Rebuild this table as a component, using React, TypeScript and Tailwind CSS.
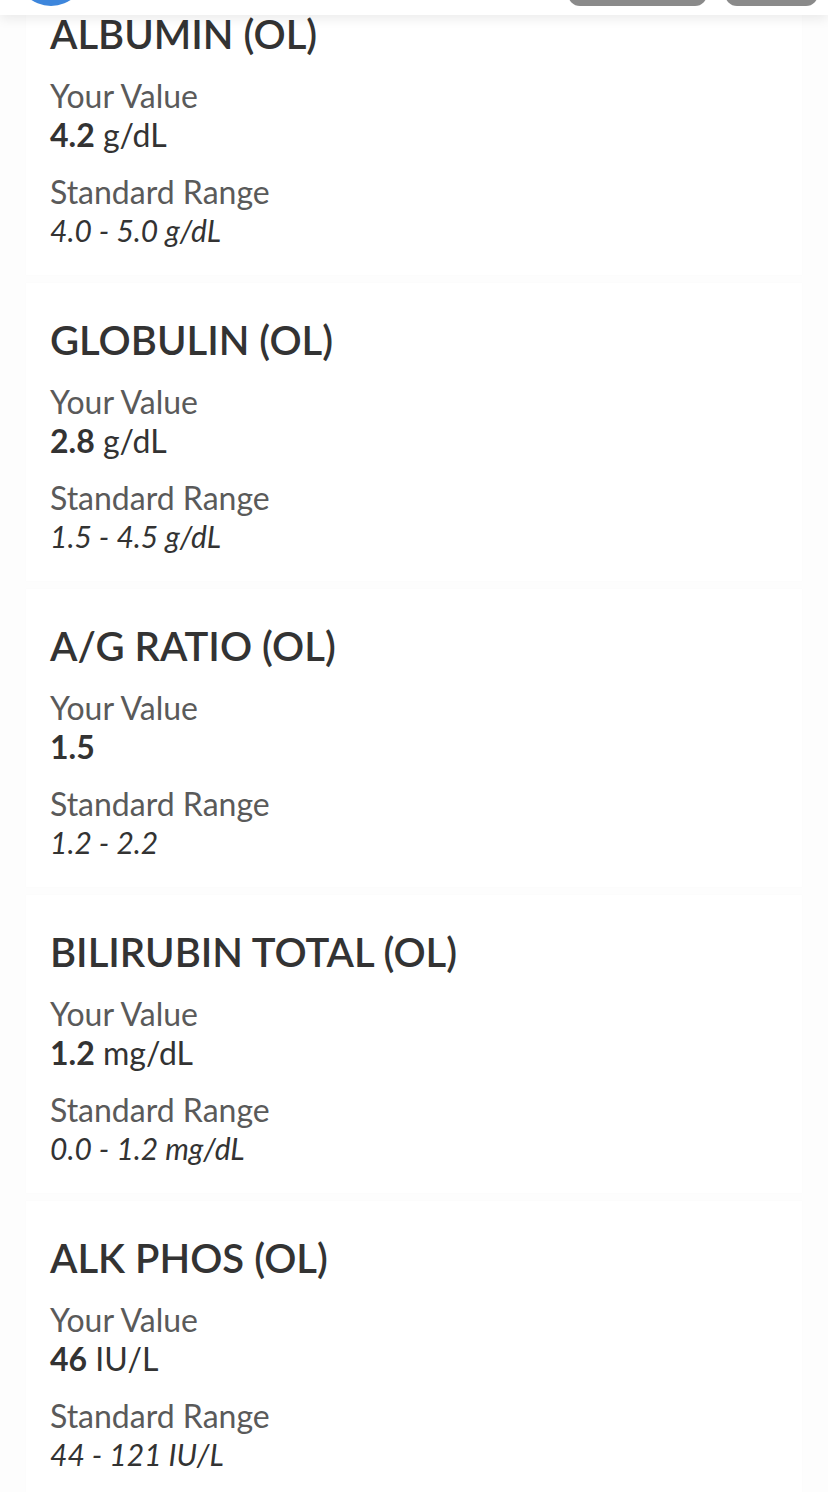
import React from 'react';

type Result = {
  name: string;
  value: string;
  unit?: string;
  range: string;
};

const results: Result[] = [
  { name: 'ALBUMIN (OL)', value: '4.2', unit: 'g/dL', range: '4.0 - 5.0 g/dL' },
  { name: 'GLOBULIN (OL)', value: '2.8', unit: 'g/dL', range: '1.5 - 4.5 g/dL' },
  { name: 'A/G RATIO (OL)', value: '1.5', range: '1.2 - 2.2' },
  { name: 'BILIRUBIN TOTAL (OL)', value: '1.2', unit: 'mg/dL', range: '0.0 - 1.2 mg/dL' },
  { name: 'ALK PHOS (OL)', value: '46', unit: 'IU/L', range: '44 - 121 IU/L' },
];

function ResultCard({ r }: { r: Result }) {
  return (
    <div className="mx-[26px] bg-white pt-[33px] pb-[25px] px-[24px] shadow-[0_0_2px_rgba(0,0,0,0.02)]">
      <h2 className="text-[40px] leading-[48px] font-semibold text-[#333]">{r.name}</h2>

      <div className="mt-[17.5px] leading-[39px]">
        <div className="text-[32px] text-[#5a5a5a]">Your Value</div>
        <div className="text-[32px] text-[#333]">
          <span className="font-bold">{r.value}</span>
          {r.unit && <span> {r.unit}</span>}
        </div>
      </div>

      <div className="mt-[18px] leading-[39px]">
        <div className="text-[32px] text-[#5a5a5a]">Standard Range</div>
        <div className="text-[30px] text-[#333] italic">{r.range}</div>
      </div>
    </div>
  );
}

export default function App() {
  return (
    <div
      className="relative w-[828px] h-[1492px] overflow-hidden bg-[#fdfdfd]"
      style={{ fontFamily: 'Lato, "Noto Sans", sans-serif' }}
    >
      {/* top bar, scrolled mostly off screen */}
      <div className="absolute top-0 left-0 right-0 z-10 h-[15px] bg-white shadow-[0_4px_12px_rgba(0,0,0,0.08)]">
        <div className="absolute left-[16px] top-[-64px] w-[70px] h-[70px] rounded-full bg-[#3d86dc]" />
        <div className="absolute left-[568px] top-[-30px] w-[139px] h-[36px] rounded-[12px] bg-[#8a8a8a]" />
        <div className="absolute left-[725px] top-[-30px] w-[93px] h-[36px] rounded-[12px] bg-[#8a8a8a]" />
      </div>

      <div className="mt-[-23px] flex flex-col gap-[8.5px]">
        {results.map((r) => (
          <ResultCard key={r.name} r={r} />
        ))}
      </div>
    </div>
  );
}
